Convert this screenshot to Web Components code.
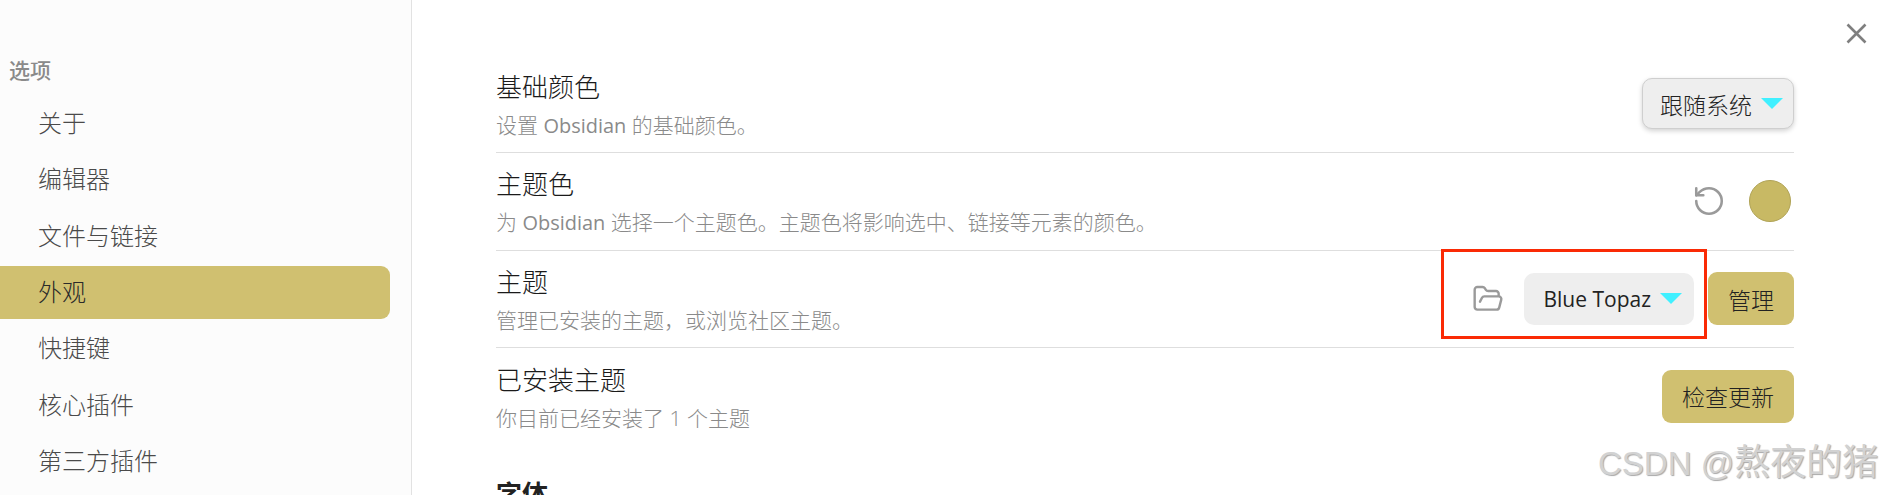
<!DOCTYPE html>
<html lang="zh">
<head>
<meta charset="utf-8">
<title>Obsidian 设置</title>
<style>
    html, body{
        margin: 0;
        height: 495px;
        overflow: hidden;
        background: #fff;
        font-family: 'Open Sans', 'Noto Sans CJK SC', sans-serif;
        font-weight: 300;
    }
    .en{
        font-size: .95em;
        font-weight: 400;
    }
</style>
</head>
<body>
<settings-page>
    <settings-sidebar slot="side" heading="选项">
        <nav-item>关于</nav-item>
        <nav-item>编辑器</nav-item>
        <nav-item>文件与链接</nav-item>
        <nav-item active>外观</nav-item>
        <nav-item>快捷键</nav-item>
        <nav-item>核心插件</nav-item>
        <nav-item>第三方插件</nav-item>
    </settings-sidebar>

    <setting-row>
        <span slot="name">基础颜色</span>
        <span slot="desc">设置 <span class="en">Obsidian</span> 的基础颜色。</span>
        <select-box raised>跟随系统</select-box>
    </setting-row>
    <setting-row>
        <span slot="name">主题色</span>
        <span slot="desc">为 <span class="en">Obsidian</span> 选择一个主题色。主题色将影响选中、链接等元素的颜色。</span>
        <icon-button icon="reset"></icon-button>
        <color-dot></color-dot>
    </setting-row>
    <setting-row>
        <span slot="name">主题</span>
        <span slot="desc">管理已安装的主题，或浏览社区主题。</span>
        <icon-button icon="folder"></icon-button>
        <select-box>Blue Topaz</select-box>
        <action-button>管理</action-button>
    </setting-row>
    <setting-row last>
        <span slot="name">已安装主题</span>
        <span slot="desc">你目前已经安装了 1 个主题</span>
        <action-button>检查更新</action-button>
    </setting-row>
    <section-title>字体</section-title>
</settings-page>

<script>
const pageTemplate = document.createElement('template')
pageTemplate.innerHTML = `
    <style>
        :host{
            display: flex;
            height: 495px;
            overflow: hidden;
            position: relative;
        }
        .content{
            flex: 1;
            padding: 55.5px 89px 0 84px;
        }
        .close{
            position: absolute;
            left: 1844px;
            top: 21px;
            width: 25px;
            height: 25px;
            fill: none;
            stroke: #7f7f7f;
            stroke-width: 2.6;
        }
        .redbox{
            position: absolute;
            left: 1441px;
            top: 249px;
            width: 260px;
            height: 84px;
            border: 3px solid #fa2a05;
        }
        .watermark{
            position: absolute;
            left: 1598px;
            top: 441px;
            font: 400 33px/44px 'Liberation Sans', 'Noto Sans CJK SC', sans-serif;
            color: #d2d2d2;
            text-shadow: 1px 1px 1px #a8a8a8;
            white-space: nowrap;
        }
        .watermark span{
            font-size: 36px;
        }
    </style>
    <slot name="side"></slot>
    <div class="content"><slot></slot></div>
    <svg class="close" viewBox="0 0 25 25"><path d="M3.5 3.5l18 18M21.5 3.5l-18 18"/></svg>
    <div class="redbox"></div>
    <div class="watermark">CSDN @<span>熬夜的猪</span></div>
`
class SettingsPage extends HTMLElement {
    constructor() {
        super()
        this.attachShadow({ mode: 'open' })
        this.shadowRoot.appendChild(pageTemplate.content.cloneNode(true))
    }
}
customElements.define('settings-page', SettingsPage)

const sidebarTemplate = document.createElement('template')
sidebarTemplate.innerHTML = `
    <style>
        :host{
            display: block;
            box-sizing: border-box;
            width: 412px;
            height: 495px;
            flex: none;
            padding: 55px 21px 0 0;
            background: #fcfcfc;
            border-right: 1px solid #e2e2e2;
        }
        h2{
            margin: 0 0 12px 9px;
            font-size: 21px;
            line-height: 30px;
            font-weight: 500;
            color: #8a8a8a;
        }
        .list{
            display: flex;
            flex-direction: column;
            gap: 3.35px;
        }
    </style>
    <h2></h2>
    <div class="list"><slot></slot></div>
`
class SettingsSidebar extends HTMLElement {
    constructor() {
        super()
        this.attachShadow({ mode: 'open' })
        this.shadowRoot.appendChild(sidebarTemplate.content.cloneNode(true))
        this.shadowRoot.querySelector('h2').textContent = this.getAttribute('heading')
    }
}
customElements.define('settings-sidebar', SettingsSidebar)

const navTemplate = document.createElement('template')
navTemplate.innerHTML = `
    <style>
        :host{
            display: flex;
            align-items: center;
            box-sizing: border-box;
            height: 53px;
            padding: 0 0 4px 38px;
            font-size: 24px;
            color: #4a4a4a;
            border-radius: 0 9px 9px 0;
        }
        :host([active]){
            background: #d0c070;
            color: #2a2a2a;
        }
    </style>
    <slot></slot>
`
class NavItem extends HTMLElement {
    constructor() {
        super()
        this.attachShadow({ mode: 'open' })
        this.shadowRoot.appendChild(navTemplate.content.cloneNode(true))
    }
}
customElements.define('nav-item', NavItem)

const rowTemplate = document.createElement('template')
rowTemplate.innerHTML = `
    <style>
        :host{
            display: flex;
            align-items: center;
            justify-content: space-between;
            box-sizing: border-box;
            height: 97.5px;
            border-bottom: 1px solid #dedede;
        }
        :host([last]){
            border-bottom-color: transparent;
        }
        .info{
            padding-top: 5px;
        }
        .name{
            font-size: 26px;
            line-height: 30px;
            color: #1a1a1a;
        }
        .desc{
            margin-top: 8px;
            font-size: 21px;
            line-height: 30px;
            color: #8a8a8a;
        }
        .control{
            display: flex;
            align-items: center;
        }
    </style>
    <div class="info">
        <div class="name"><slot name="name"></slot></div>
        <div class="desc"><slot name="desc"></slot></div>
    </div>
    <div class="control"><slot></slot></div>
`
class SettingRow extends HTMLElement {
    constructor() {
        super()
        this.attachShadow({ mode: 'open' })
        this.shadowRoot.appendChild(rowTemplate.content.cloneNode(true))
    }
}
customElements.define('setting-row', SettingRow)

const selectTemplate = document.createElement('template')
selectTemplate.innerHTML = `
    <style>
        :host{
            display: flex;
            align-items: center;
            gap: 9px;
            box-sizing: border-box;
            height: 52px;
            padding: 0 12px 0 19px;
            background: #eeeeee;
            border-radius: 10px;
            font-size: 21px;
            font-weight: 400;
            color: #222;
        }
        :host([raised]){
            height: 51px;
            padding: 0 10px 0 17px;
            font-size: 23px;
            font-weight: 300;
            border: 1px solid #cfcfcf;
            box-shadow: 0 2px 5px rgba(0, 0, 0, .18);
        }
        .arrow{
            width: 0;
            height: 0;
            border-left: 11.5px solid transparent;
            border-right: 11.5px solid transparent;
            border-top: 11.5px solid #40f0ff;
        }
    </style>
    <slot></slot>
    <span class="arrow"></span>
`
class SelectBox extends HTMLElement {
    constructor() {
        super()
        this.attachShadow({ mode: 'open' })
        this.shadowRoot.appendChild(selectTemplate.content.cloneNode(true))
    }
}
customElements.define('select-box', SelectBox)

const buttonTemplate = document.createElement('template')
buttonTemplate.innerHTML = `
    <style>
        :host{
            display: flex;
            align-items: center;
            height: 53px;
            margin-left: 14px;
            padding: 0 20px;
            background: #d0c070;
            border-radius: 9px;
            font-size: 23px;
            color: #222;
        }
    </style>
    <slot></slot>
`
class ActionButton extends HTMLElement {
    constructor() {
        super()
        this.attachShadow({ mode: 'open' })
        this.shadowRoot.appendChild(buttonTemplate.content.cloneNode(true))
    }
}
customElements.define('action-button', ActionButton)

const iconPaths = {
    reset: '<path d="M3 12a9 9 0 1 0 9-9 9.75 9.75 0 0 0-6.74 2.74L3 8"/><path d="M3 3v5h5"/>',
    folder: '<path d="m6 14 1.5-2.9A2 2 0 0 1 9.24 10H20a2 2 0 0 1 1.94 2.5l-1.54 6a2 2 0 0 1-1.95 1.5H4a2 2 0 0 1-2-2V5a2 2 0 0 1 2-2h3.9a2 2 0 0 1 1.69.9l.81 1.2a2 2 0 0 0 1.67.9H18a2 2 0 0 1 2 2v2"/>'
}
class IconButton extends HTMLElement {
    constructor() {
        super()
        this.attachShadow({ mode: 'open' })
        this.shadowRoot.innerHTML = `
            <style>
                :host{
                    display: flex;
                    margin-right: 20.5px;
                    --size: 32px;
                }
                :host([icon="reset"]){
                    margin-right: 23px;
                    --size: 34px;
                }
                svg{
                    width: var(--size);
                    height: var(--size);
                    fill: none;
                    stroke: #9a9a9a;
                    stroke-width: 1.8;
                    stroke-linecap: round;
                    stroke-linejoin: round;
                }
            </style>
            <svg viewBox="0 0 24 24">${iconPaths[this.getAttribute('icon')]}</svg>
        `
    }
}
customElements.define('icon-button', IconButton)

class ColorDot extends HTMLElement {
    constructor() {
        super()
        this.attachShadow({ mode: 'open' })
        this.shadowRoot.innerHTML = `
            <style>
                :host{
                    display: block;
                    box-sizing: border-box;
                    width: 42px;
                    height: 42px;
                    margin-right: 3px;
                    border-radius: 50%;
                    background: #c8b964;
                    border: 1.5px solid #b0a356;
                }
            </style>
        `
    }
}
customElements.define('color-dot', ColorDot)

class SectionTitle extends HTMLElement {
    constructor() {
        super()
        this.attachShadow({ mode: 'open' })
        this.shadowRoot.innerHTML = `
            <style>
                :host{
                    display: block;
                    margin-top: 31px;
                    font-size: 26px;
                    line-height: 34px;
                    font-weight: 700;
                    color: #222;
                }
            </style>
            <slot></slot>
        `
    }
}
customElements.define('section-title', SectionTitle)
</script>
</body>
</html>
